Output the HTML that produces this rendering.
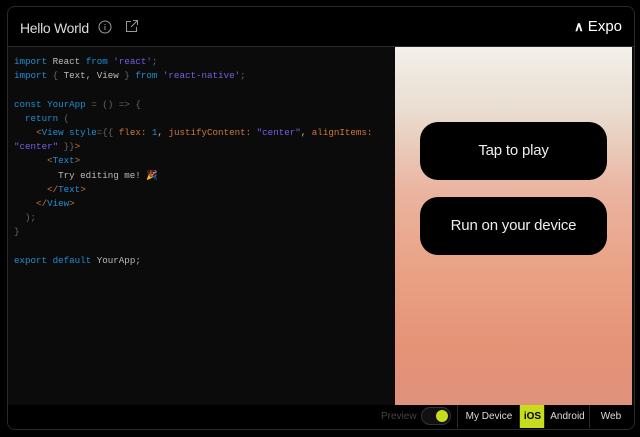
<!DOCTYPE html>
<html><head><style>
body{margin:0;width:640px;height:437px;background:#000;overflow:hidden;font-family:"Liberation Sans",sans-serif;position:relative}
.frame{position:absolute;left:7px;top:6px;width:626px;height:422px;border:1px solid #2a2a2a;border-radius:8px;background:#0b0b0b;overflow:hidden}
.hdr{position:absolute;left:0;top:0;right:0;height:39px;background:#000;border-bottom:1px solid #2a2a2a}
.title{position:absolute;left:12px;top:13px;color:#ddd;font-size:14px;letter-spacing:-0.3px}
.code{position:absolute;left:6px;top:48px;font-family:"Liberation Mono",monospace;font-size:9.2px;line-height:14.2px;color:#bbb;white-space:pre}
.k{color:#1e8fd6}.s{color:#7b5ce6}.t{color:#d2773a}.p{color:#666}
.prev{position:absolute;left:387px;top:40px;width:237px;height:358px;background:linear-gradient(180deg,#f3f0ea 0%,#e9ddd0 18%,#eab4a0 40%,#e9a083 65%,#e59277 85%,#e0927c 100%)}
.btn{position:absolute;left:25px;width:187px;height:58px;background:#000;border-radius:18px;color:#eee;font-size:15px;text-align:center;line-height:58px;letter-spacing:-0.2px}
.bar{position:absolute;left:0;right:0;top:398px;height:24px;background:#000}
.tab{position:absolute;top:0;height:23px;line-height:23px;font-size:10px;color:#ddd;text-align:center;border-left:1px solid #2a2a2a}
</style></head><body>
<div class="frame">
<div class="hdr"><div class="title">Hello World</div>
<svg style="position:absolute;left:90px;top:13px" width="14" height="14"><circle cx="7" cy="7" r="6" fill="none" stroke="#999" stroke-width="1"/><rect x="6.5" y="6" width="1" height="4" fill="#999"/><rect x="6.5" y="4" width="1" height="1" fill="#999"/></svg>
<svg style="position:absolute;left:117px;top:12px" width="14" height="14" fill="none" stroke="#999" stroke-width="1"><path d="M6 2.5H1.5V12.5H11.5V8M8 1.5H12.5V6M12.5 1.5L6 8"/></svg>
<div style="position:absolute;right:12px;top:11px;color:#fff;font-size:15px"><span style="font-weight:bold;font-size:13px">&#x2227;</span> Expo</div>
</div>
<div class="code"><span class="k">import</span> React <span class="k">from</span> <span class="s">'react'</span><span class="p">;</span>
<span class="k">import</span> <span class="p">{</span> Text, View <span class="p">}</span> <span class="k">from</span> <span class="s">'react-native'</span><span class="p">;</span>

<span class="k">const</span> <span class="k">YourApp</span> <span class="p">= () =&gt; {</span>
  <span class="k">return</span> <span class="p">(</span>
    <span class="t">&lt;</span><span class="k">View</span> <span class="k">style</span><span class="p">={{</span> <span class="t">flex:</span> <span class="k">1</span>, <span class="t">justifyContent:</span> <span class="s">"center"</span>, <span class="t">alignItems:</span>
<span class="s">"center"</span> <span class="p">}}</span><span class="t">&gt;</span>
      <span class="t">&lt;</span><span class="k">Text</span><span class="t">&gt;</span>
        Try editing me! <span style="color:#4a8de0">🎉</span>
      <span class="t">&lt;/</span><span class="k">Text</span><span class="t">&gt;</span>
    <span class="t">&lt;/</span><span class="k">View</span><span class="t">&gt;</span>
  <span class="p">);</span>
<span class="p">}</span>

<span class="k">export</span> <span class="k">default</span> YourApp;</div>
<div class="prev">
<div class="btn" style="top:75px">Tap to play</div>
<div class="btn" style="top:150px">Run on your device</div>
</div>
<div class="bar">
<div style="position:absolute;left:373px;top:6px;font-size:10px;color:#444">Preview</div>
<div style="position:absolute;left:413px;top:2px;width:28px;height:16px;border-radius:9px;background:#111;border:1px solid #333"><div style="position:absolute;right:2px;top:2px;width:12px;height:12px;border-radius:6px;background:#c6dc1c"></div></div>
<div class="tab" style="left:449px;width:62px">My Device</div>
<div class="tab" style="left:511px;width:25px;background:#c6dc1c;color:#000;font-weight:bold">iOS</div>
<div class="tab" style="left:536px;width:45px">Android</div>
<div class="tab" style="left:581px;width:42px">Web</div>
</div>
</div>
</body></html>
